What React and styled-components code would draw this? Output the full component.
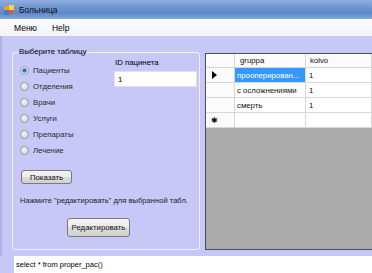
import React from "react"
import styled, { createGlobalStyle } from "styled-components"

const GlobalStyle = createGlobalStyle`
  html, body {
    margin: 0;
    padding: 0;
    background: #ffffff;
  }
  body {
    font-family: "Liberation Sans", Arial, sans-serif;
    font-size: 7.8px;
    color: #000;
  }
`

const Window = styled.div`
  width: 372px;
  height: 273px;
  display: flex;
  flex-direction: column;
  overflow: hidden;
`
const TitleBar = styled.div`
  height: 19px;
  display: flex;
  align-items: center;
  gap: 5px;
  padding-left: 4px;
  background: linear-gradient(180deg, #8eaee0 0%, #6a93cf 45%, #5f88c6 70%, #86a9dc 100%);
  font-size: 8.5px;
  color: #101010;
`
const MenuBar = styled.div`
  height: 17px;
  display: flex;
  align-items: center;
  gap: 15px;
  padding-left: 14px;
  background: linear-gradient(180deg, #fdfdff 0%, #f2f4fa 100%);
  font-size: 8.5px;
`
const Body = styled.div`
  flex: 1;
  display: flex;
  align-items: flex-start;
  padding: 11px 0 0 10px;
  border-left: 2px solid #b0b0ea;
  background: #c7c7f8;
`
const GroupBox = styled.fieldset`
  box-sizing: border-box;
  width: 188px;
  height: 203px;
  margin: 0;
  padding: 0 0 0 7px;
  border: 1px solid #f2f2ff;
  border-radius: 3px;
  display: flex;
  flex-direction: column;
  align-items: flex-start;
`
const Legend = styled.legend`
  margin-left: -2px;
  padding: 0 1px;
  line-height: 10px;
`
const TopRow = styled.div`
  display: flex;
  margin-top: 1px;
`
const RadioList = styled.div`
  width: 94px;
  padding-top: 4px;
  display: flex;
  flex-direction: column;
`
const RadioRow = styled.label`
  height: 16px;
  display: flex;
  align-items: center;
  gap: 4px;
  color: #2a2a2a;
`
const RadioDot = styled.span`
  box-sizing: border-box;
  width: 9px;
  height: 9px;
  border-radius: 50%;
  border: 1px solid #9a9aa4;
  background: ${(p) =>
    p.checked
      ? "radial-gradient(circle, #2f7fd8 0, #2c6cc0 1.8px, #eef2f8 2.6px, #d6d9de 100%)"
      : "radial-gradient(circle at 40% 35%, #f6f6f6 0, #dcdcdc 60%, #c4c4c4 100%)"};
`
const IdColumn = styled.div`
  display: flex;
  flex-direction: column;
`
const IdLabel = styled.div`
  line-height: 10px;
  padding-left: 1px;
`
const IdInput = styled.div`
  box-sizing: border-box;
  margin-top: 3px;
  width: 83px;
  height: 16px;
  padding: 0 3px;
  display: flex;
  align-items: center;
  background: #ffffff;
  border: 1px solid #e0e0ee;
`
const Button = styled.div`
  box-sizing: border-box;
  width: ${(p) => p.w}px;
  height: ${(p) => p.h}px;
  margin-top: 12px;
  margin-left: ${(p) => p.offset || 0}px;
  display: flex;
  align-items: center;
  justify-content: center;
  border: 1px solid #7a7a7a;
  border-radius: 3px;
  background: linear-gradient(180deg, #f4f4f4 0%, #ebebeb 48%, #dcdcdc 52%, #d0d0d0 100%);
  color: #111;
`
const Hint = styled.div`
  margin-top: 12px;
  line-height: 10px;
  font-size: 7.6px;
  color: #222;
`
const DataGrid = styled.div`
  box-sizing: border-box;
  flex: 1;
  height: 197px;
  margin: 6px 0 0 5px;
  border: 1px solid #4e4e56;
  border-right: none;
  background: #ababab;
`
const GridRow = styled.div`
  display: grid;
  grid-template-columns: 29px 71px 1fr;
  height: ${(p) => p.h}px;
  background: #ffffff;
`
const Cell = styled.div`
  box-sizing: border-box;
  display: flex;
  align-items: center;
  padding-left: ${(p) => p.pad || 2}px;
  border-right: 1px solid #d6d6d6;
  border-bottom: 1px solid #d6d6d6;
  white-space: nowrap;
  overflow: hidden;
  color: ${(p) => (p.selected ? "#ffffff" : "#111")};
  background: ${(p) => (p.selected ? "#3399ff" : p.header ? "#fbfbfb" : "#ffffff")};
`
const Arrow = styled.span`
  width: 0;
  height: 0;
  margin-left: 4px;
  border-top: 4px solid transparent;
  border-bottom: 4px solid transparent;
  border-left: 5px solid #000;
`
const StatusRow = styled.div`
  height: 17px;
  display: flex;
  padding-left: 14px;
  background: #c7c7f8;
`
const StatusBox = styled.div`
  flex: 1;
  display: flex;
  align-items: center;
  padding-left: 2px;
  background: #ffffff;
  font-size: 7.5px;
`

const AppIcon = () => (
  <svg width="10" height="10" viewBox="0 0 10 10">
    <rect x="0" y="1" width="5" height="4" fill="#f39a2b" />
    <rect x="5" y="0" width="5" height="5" fill="#f7d24a" />
    <rect x="0" y="5" width="5" height="5" fill="#3d7fd6" />
    <rect x="5" y="5" width="4" height="4" fill="#e25a3a" />
  </svg>
)

const options = ["Пациенты", "Отделения", "Врачи", "Услуги", "Препараты", "Лечение"]

const rows = [
  { name: "прооперирован...", count: "1", current: true },
  { name: "с осложнениями", count: "1" },
  { name: "смерть", count: "1" },
]

export default function App() {
  return (
    <>
      <GlobalStyle />
      <Window>
        <TitleBar>
          <AppIcon />
          <span>Больница</span>
        </TitleBar>
        <MenuBar>
          <span>Меню</span>
          <span>Help</span>
        </MenuBar>
        <Body>
          <GroupBox>
            <Legend>Выберите таблицу</Legend>
            <TopRow>
              <RadioList>
                {options.map((o, i) => (
                  <RadioRow key={o}>
                    <RadioDot checked={i === 0} />
                    {o}
                  </RadioRow>
                ))}
              </RadioList>
              <IdColumn>
                <IdLabel>ID пацинета</IdLabel>
                <IdInput>1</IdInput>
              </IdColumn>
            </TopRow>
            <Button w={51} h={14} offset={1}>Показать</Button>
            <Hint>Нажмите "редактировать" для выбранной табл.</Hint>
            <Button w={63} h={19} offset={47}>Редактировать</Button>
          </GroupBox>
          <DataGrid>
            <GridRow h={14}>
              <Cell header />
              <Cell header pad={5}>gruppa</Cell>
              <Cell header pad={4}>kolvo</Cell>
            </GridRow>
            {rows.map((r) => (
              <GridRow h={15} key={r.name}>
                <Cell header>{r.current && <Arrow />}</Cell>
                <Cell selected={r.current}>{r.name}</Cell>
                <Cell pad={3}>{r.count}</Cell>
              </GridRow>
            ))}
            <GridRow h={15}>
              <Cell header pad={5}>✱</Cell>
              <Cell />
              <Cell />
            </GridRow>
          </DataGrid>
        </Body>
        <StatusRow>
          <StatusBox>select * from proper_pac()</StatusBox>
        </StatusRow>
      </Window>
    </>
  )
}
